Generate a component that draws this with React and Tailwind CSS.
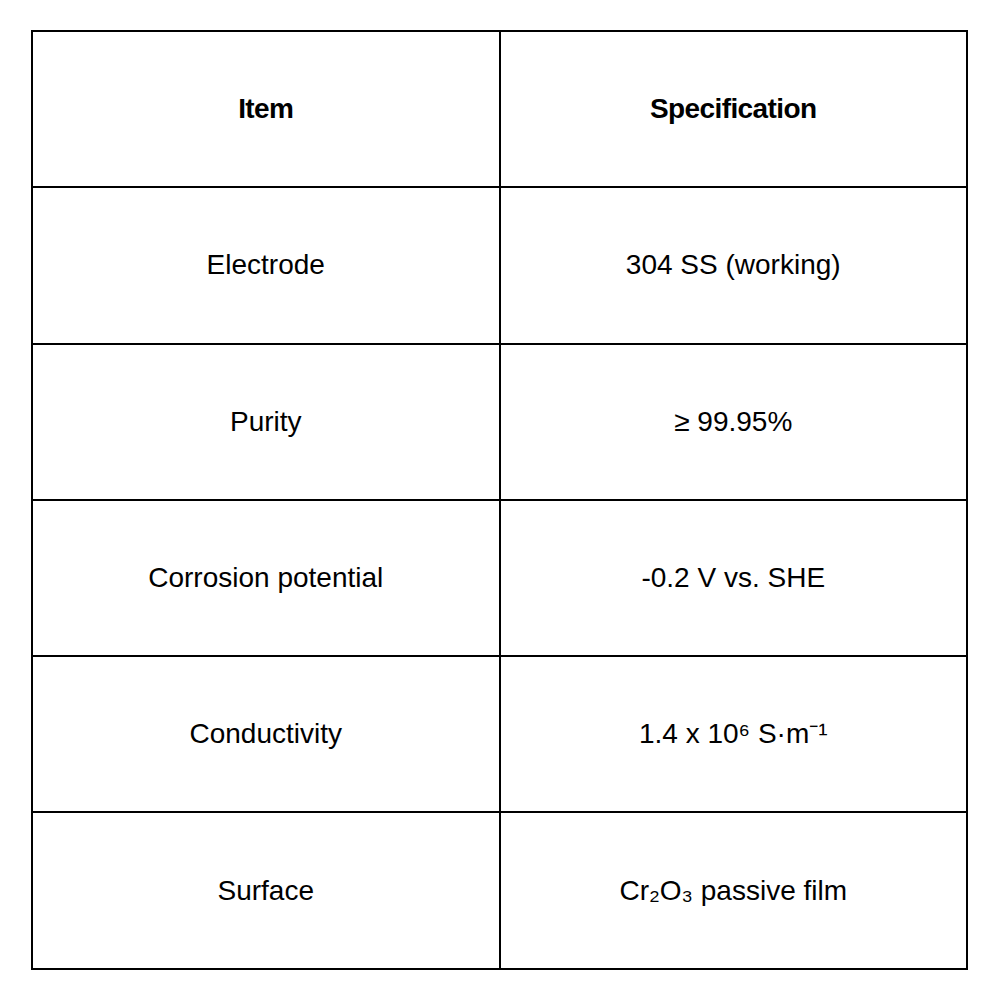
import React from 'react';

const rows = [
    ['Electrode', '304 SS (working)'],
    ['Purity', '≥ 99.95%'],
    ['Corrosion potential', '-0.2 V vs. SHE'],
    ['Conductivity', '1.4 x 10⁶ S·m⁻¹'],
    ['Surface', 'Cr₂O₃ passive film'],
];

const Cell = ({ children, bold }) => (
    <div
        className={`h-[156.3px] flex items-center justify-center border-r-2 border-b-2 border-black text-[28px] text-black ${bold ? 'font-semibold tracking-[-0.6px]' : ''}`}
    >
        {children}
    </div>
);

const App = () => {
    return (
        <div className="w-[1000px] h-[1000px] bg-white pl-[31px] pt-[30px]" style={{ fontFamily: '"Liberation Sans", Arial, sans-serif' }}>
            <div className="w-[937px] grid grid-cols-2 border-l-2 border-t-2 border-black">
                <Cell bold>Item</Cell>
                <Cell bold>Specification</Cell>
                {rows.map(([item, spec]) => (
                    <React.Fragment key={item}>
                        <Cell>{item}</Cell>
                        <Cell>{spec}</Cell>
                    </React.Fragment>
                ))}
            </div>
        </div>
    );
};

export default App;
